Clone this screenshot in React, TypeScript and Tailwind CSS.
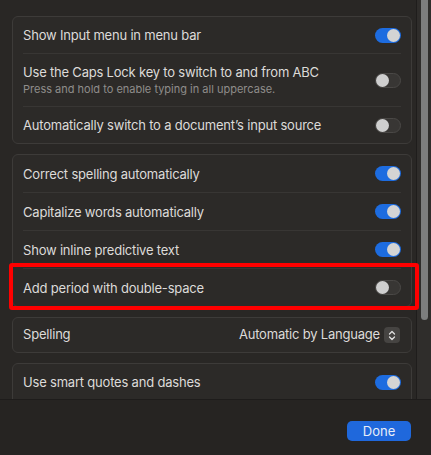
import React from "react";

function Toggle({ on }: { on: boolean }) {
  return on ? (
    <div className="flex h-[15px] w-[26px] items-center justify-end rounded-full bg-[#1d6ce0] px-[1px]">
      <div className="h-[13px] w-[13px] rounded-full bg-[#d4d4d4]" />
    </div>
  ) : (
    <div className="flex h-[15px] w-[26px] items-center justify-start rounded-full border border-[#4a4846] bg-[#383634]">
      <div className="h-[13px] w-[13px] rounded-full bg-[#cfcfcf]" />
    </div>
  );
}

function Row({ label, on, sub, h = "h-[36px]" }: { label: string; on: boolean; sub?: string; h?: string }) {
  return (
    <div className={`flex ${h} items-center justify-between px-[10px]`}>
      <div className="flex flex-col">
        <span className="text-[13px] leading-[16px] tracking-[-0.2px] text-[#dddbd9]">{label}</span>
        {sub && <span className="mt-[2px] text-[11px] leading-[14px] text-[#8f8d8b]">{sub}</span>}
      </div>
      <Toggle on={on} />
    </div>
  );
}

function Sep() {
  return <div className="mx-[10px] h-px bg-[#383634]" />;
}

function Panel({ children }: { children: React.ReactNode }) {
  return <div className="rounded-[6px] border border-[#3d3b39] bg-[#2c2a28]">{children}</div>;
}

export default function App() {
  return (
    <div
      className="relative flex h-[455px] w-[431px] flex-col overflow-hidden bg-[#292725]"
      style={{ fontFamily: "Inter, 'Noto Sans', sans-serif" }}
    >
      <div className="flex h-[399px]">
        <div className="flex-1 overflow-hidden pl-[12px] pr-[4px] pt-[16px]">
          <div className="flex w-[400px] flex-col gap-[10px]">
            <Panel>
              <Row label="Show Input menu in menu bar" on={true} />
              <Sep />
              <Row
                label="Use the Caps Lock key to switch to and from ABC"
                sub="Press and hold to enable typing in all uppercase."
                on={false}
                h="h-[52px]"
              />
              <Sep />
              <Row label="Automatically switch to a document’s input source" on={false} />
            </Panel>
            <Panel>
              <Row label="Correct spelling automatically" on={true} h="h-[37px]" />
              <Sep />
              <Row label="Capitalize words automatically" on={true} h="h-[37px]" />
              <Sep />
              <Row label="Show inline predictive text" on={true} h="h-[37px]" />
              <Sep />
              <Row label="Add period with double-space" on={false} h="h-[37px]" />
            </Panel>
            <Panel>
              <div className="flex h-[34px] items-center justify-between pl-[10px] pr-[11px]">
                <span className="text-[13px] tracking-[-0.2px] text-[#dddbd9]">Spelling</span>
                <div className="flex items-center gap-[4px]">
                  <span className="text-[13px] tracking-[-0.2px] text-[#dddbd9]">Automatic by Language</span>
                  <div className="flex h-[16px] w-[16px] items-center justify-center rounded-[4px] bg-[#464442]">
                    <svg width="8" height="11" viewBox="0 0 8 11" fill="none">
                      <path d="M1.5 4 L4 1.5 L6.5 4" stroke="#e0e0e0" strokeWidth="1.3" strokeLinecap="round" strokeLinejoin="round" />
                      <path d="M1.5 7 L4 9.5 L6.5 7" stroke="#e0e0e0" strokeWidth="1.3" strokeLinecap="round" strokeLinejoin="round" />
                    </svg>
                  </div>
                </div>
              </div>
            </Panel>
            <Panel>
              <Row label="Use smart quotes and dashes" on={true} />
              <Sep />
              <div className="h-[36px]" />
            </Panel>
          </div>
        </div>
        <div className="relative w-[15px] border-l border-[#1f1d1c] bg-[#2f2d2b]">
          <div className="absolute left-[4px] top-[-8px] h-[328px] w-[7px] rounded-full bg-[#7d7d7d]" />
        </div>
      </div>
      <div className="flex flex-1 items-start justify-end border-t border-[#1e1c1b] bg-[#262422] pr-[20px] pt-[21px]">
        <button className="h-[20px] w-[64px] rounded-[5px] bg-[#1f68dc] text-[13px] leading-[20px] text-[#e8eef8]">
          Done
        </button>
      </div>
      <div className="pointer-events-none absolute left-[9px] top-[263px] h-[47px] w-[410px] rounded-[3px] border-[4px] border-[#ff0000]" />
    </div>
  );
}
